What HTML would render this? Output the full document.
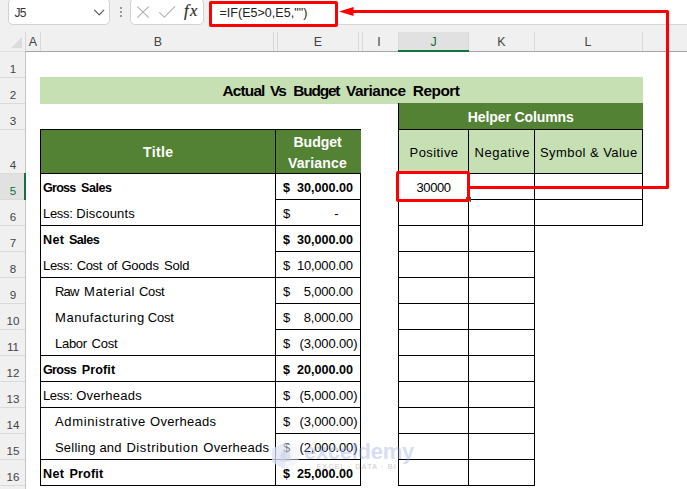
<!DOCTYPE html>
<html lang="en"><head><meta charset="utf-8"><title>Actual Vs Budget Variance Report</title>
<style>
html,body{margin:0;padding:0}
body{width:687px;height:489px;position:relative;overflow:hidden;background:#fff;font-family:"Liberation Sans", sans-serif}
.t{position:absolute;white-space:pre;line-height:20px;font-family:"Liberation Sans", sans-serif}
.a{position:absolute}
.k{position:absolute;background:#000}
</style></head>
<body>
<div class="a" style="left:0px;top:0px;width:687px;height:52px;background:#f0f0f0;"></div>
<div class="a" style="left:0px;top:52px;width:26px;height:437px;background:#f0f0f0;"></div>
<div class="a" style="left:209px;top:-1px;width:490px;height:26px;background:#fff;border:1px solid #d6d6d6;border-radius:4px 0 0 4px;box-sizing:border-box"></div>
<div class="a" style="left:8px;top:-2px;width:102px;height:27px;background:#fff;border:1px solid #d2d2d2;border-radius:5px;box-sizing:border-box"></div>
<div class="a" style="left:130px;top:-2px;width:74px;height:27px;background:#fff;border:1px solid #d2d2d2;border-radius:5px;box-sizing:border-box"></div>
<div class="a" style="left:119.5px;top:7.1px;width:2px;height:2px;background:#7c7c7c;border-radius:1px"></div>
<div class="a" style="left:119.5px;top:11.1px;width:2px;height:2px;background:#7c7c7c;border-radius:1px"></div>
<div class="a" style="left:119.5px;top:15.1px;width:2px;height:2px;background:#7c7c7c;border-radius:1px"></div>
<svg class="a" style="left:0;top:0" width="210" height="28" viewBox="0 0 210 28" fill="none" stroke-linecap="round" stroke-linejoin="round"><path d="M94.6 10.1 L99.2 14.9 L103.8 10.1" stroke="#555" stroke-width="1.15"/><path d="M137.6 6.9 L148.4 17.4 M148.4 6.9 L137.6 17.4" stroke="#b0b0b0" stroke-width="1.1"/><path d="M159.6 12.6 L164.4 17.2 L174.8 6.6" stroke="#b0b0b0" stroke-width="1.1"/></svg>
<div class="t" style="left:184px;top:1px;font-family:'Liberation Serif',serif;font-style:italic;font-size:16.5px;color:#2b2b2b;letter-spacing:1.5px;line-height:20px;-webkit-text-stroke:0.2px #2b2b2b">fx</div>
<div class="a" style="left:25px;top:32px;width:1px;height:19px;background:#d9d9d9;"></div>
<div class="a" style="left:40px;top:32px;width:1px;height:19px;background:#d9d9d9;"></div>
<div class="a" style="left:273px;top:32px;width:1px;height:19px;background:#d9d9d9;"></div>
<div class="a" style="left:277px;top:32px;width:1px;height:19px;background:#d9d9d9;"></div>
<div class="a" style="left:358px;top:32px;width:1px;height:19px;background:#d9d9d9;"></div>
<div class="a" style="left:362px;top:32px;width:1px;height:19px;background:#d9d9d9;"></div>
<div class="a" style="left:398px;top:32px;width:1px;height:19px;background:#d9d9d9;"></div>
<div class="a" style="left:468px;top:32px;width:1px;height:19px;background:#d9d9d9;"></div>
<div class="a" style="left:534px;top:32px;width:1px;height:19px;background:#d9d9d9;"></div>
<div class="a" style="left:642px;top:32px;width:1px;height:19px;background:#d9d9d9;"></div>
<div class="a" style="left:399px;top:32px;width:69px;height:18px;background:#e1e1e1;"></div>
<div class="a" style="left:0px;top:51px;width:26px;height:1px;background:#e2e2e2;"></div>
<div class="a" style="left:25px;top:51px;width:662px;height:1px;background:#a6a6a6;"></div>
<div class="a" style="left:398px;top:50px;width:71px;height:2px;background:#13733f;"></div>
<div class="a" style="left:25px;top:52px;width:1px;height:437px;background:#c6c6c6;"></div>
<div class="a" style="left:0px;top:77px;width:25px;height:1px;background:#dadada;"></div>
<div class="a" style="left:0px;top:103px;width:25px;height:1px;background:#dadada;"></div>
<div class="a" style="left:0px;top:129px;width:25px;height:1px;background:#dadada;"></div>
<div class="a" style="left:0px;top:173px;width:25px;height:1px;background:#dadada;"></div>
<div class="a" style="left:0px;top:199px;width:25px;height:1px;background:#dadada;"></div>
<div class="a" style="left:0px;top:225px;width:25px;height:1px;background:#dadada;"></div>
<div class="a" style="left:0px;top:251px;width:25px;height:1px;background:#dadada;"></div>
<div class="a" style="left:0px;top:277px;width:25px;height:1px;background:#dadada;"></div>
<div class="a" style="left:0px;top:303px;width:25px;height:1px;background:#dadada;"></div>
<div class="a" style="left:0px;top:329px;width:25px;height:1px;background:#dadada;"></div>
<div class="a" style="left:0px;top:355px;width:25px;height:1px;background:#dadada;"></div>
<div class="a" style="left:0px;top:381px;width:25px;height:1px;background:#dadada;"></div>
<div class="a" style="left:0px;top:407px;width:25px;height:1px;background:#dadada;"></div>
<div class="a" style="left:0px;top:433px;width:25px;height:1px;background:#dadada;"></div>
<div class="a" style="left:0px;top:459px;width:25px;height:1px;background:#dadada;"></div>
<div class="a" style="left:0px;top:485px;width:25px;height:1px;background:#dadada;"></div>
<div class="a" style="left:0px;top:174px;width:24px;height:25px;background:#e1e1e1;"></div>
<div class="a" style="left:24px;top:173px;width:2px;height:27px;background:#13733f;"></div>
<svg class="a" style="left:10px;top:36px" width="13" height="13" viewBox="0 0 13 13"><path d="M12 1 L12 12 L1 12 Z" fill="#dcdcdc"/></svg>
<div class="a" style="left:40px;top:77px;width:603px;height:27px;background:#c6e0b4;"></div>
<div class="a" style="left:399px;top:103px;width:244px;height:26px;background:#548235;"></div>
<div class="a" style="left:399px;top:130px;width:243px;height:43px;background:#c6e0b4;"></div>
<div class="a" style="left:41px;top:130px;width:320px;height:43px;background:#548235;"></div>
<div class="k" style="left:40px;top:129px;width:321px;height:1px"></div>
<div class="k" style="left:40px;top:173px;width:321px;height:1px"></div>
<div class="k" style="left:40px;top:225px;width:236px;height:1px"></div>
<div class="k" style="left:40px;top:277px;width:236px;height:1px"></div>
<div class="k" style="left:40px;top:355px;width:236px;height:1px"></div>
<div class="k" style="left:40px;top:381px;width:236px;height:1px"></div>
<div class="k" style="left:40px;top:407px;width:236px;height:1px"></div>
<div class="k" style="left:40px;top:459px;width:236px;height:1px"></div>
<div class="k" style="left:40px;top:485px;width:236px;height:1px"></div>
<div class="k" style="left:275px;top:199px;width:86px;height:1px"></div>
<div class="k" style="left:275px;top:225px;width:86px;height:1px"></div>
<div class="k" style="left:275px;top:251px;width:86px;height:1px"></div>
<div class="k" style="left:275px;top:277px;width:86px;height:1px"></div>
<div class="k" style="left:275px;top:303px;width:86px;height:1px"></div>
<div class="k" style="left:275px;top:329px;width:86px;height:1px"></div>
<div class="k" style="left:275px;top:355px;width:86px;height:1px"></div>
<div class="k" style="left:275px;top:381px;width:86px;height:1px"></div>
<div class="k" style="left:275px;top:407px;width:86px;height:1px"></div>
<div class="k" style="left:275px;top:433px;width:86px;height:1px"></div>
<div class="k" style="left:275px;top:459px;width:86px;height:1px"></div>
<div class="k" style="left:275px;top:485px;width:86px;height:1px"></div>
<div class="k" style="left:40px;top:129px;width:1px;height:357px"></div>
<div class="k" style="left:275px;top:129px;width:1px;height:357px"></div>
<div class="k" style="left:360px;top:173px;width:1px;height:313px"></div>
<div class="k" style="left:398px;top:129px;width:245px;height:1px"></div>
<div class="k" style="left:398px;top:173px;width:245px;height:1px"></div>
<div class="k" style="left:398px;top:199px;width:245px;height:1px"></div>
<div class="k" style="left:398px;top:225px;width:245px;height:1px"></div>
<div class="k" style="left:398px;top:251px;width:137px;height:1px"></div>
<div class="k" style="left:398px;top:277px;width:137px;height:1px"></div>
<div class="k" style="left:398px;top:303px;width:137px;height:1px"></div>
<div class="k" style="left:398px;top:329px;width:137px;height:1px"></div>
<div class="k" style="left:398px;top:355px;width:137px;height:1px"></div>
<div class="k" style="left:398px;top:381px;width:137px;height:1px"></div>
<div class="k" style="left:398px;top:407px;width:137px;height:1px"></div>
<div class="k" style="left:398px;top:433px;width:137px;height:1px"></div>
<div class="k" style="left:398px;top:459px;width:137px;height:1px"></div>
<div class="k" style="left:398px;top:485px;width:137px;height:1px"></div>
<div class="k" style="left:398px;top:103px;width:1px;height:383px"></div>
<div class="k" style="left:468px;top:129px;width:1px;height:357px"></div>
<div class="k" style="left:534px;top:129px;width:1px;height:357px"></div>
<div class="k" style="left:642px;top:129px;width:1px;height:97px"></div>
<div class="t" id="t0" style="top:81.00px;font-size:15.4px;color:#000;font-weight:bold;letter-spacing:-0.849px;left:222.60px;">Actual</div>
<div class="t" id="t1" style="top:81.00px;font-size:15.4px;color:#000;font-weight:bold;letter-spacing:-2.028px;left:270.10px;">Vs</div>
<div class="t" id="t2" style="top:81.00px;font-size:15.4px;color:#000;font-weight:bold;letter-spacing:-1.143px;left:293.20px;">Budget</div>
<div class="t" id="t3" style="top:81.00px;font-size:15.4px;color:#000;font-weight:bold;letter-spacing:-0.475px;left:346.00px;">Variance</div>
<div class="t" id="t4" style="top:81.00px;font-size:15.4px;color:#000;font-weight:bold;letter-spacing:-0.499px;left:412.80px;">Report</div>
<div class="t" id="t5" style="top:142.00px;font-size:14px;color:#fff;font-weight:bold;letter-spacing:0.367px;left:143.00px;">Title</div>
<div class="t" id="t6" style="top:132.00px;font-size:14px;color:#fff;font-weight:bold;letter-spacing:-0.004px;left:293.50px;">Budget</div>
<div class="t" id="t7" style="top:153.00px;font-size:14px;color:#fff;font-weight:bold;letter-spacing:0.170px;left:287.90px;">Variance</div>
<div class="t" id="t8" style="top:107.00px;font-size:14px;color:#fff;font-weight:bold;letter-spacing:-0.105px;left:467.80px;">Helper Columns</div>
<div class="t" id="t9" style="top:143.00px;font-size:13px;color:#000;letter-spacing:0.424px;left:409.55px;">Positive</div>
<div class="t" id="t10" style="top:143.00px;font-size:13px;color:#000;letter-spacing:0.527px;left:474.50px;">Negative</div>
<div class="t" id="t11" style="top:143.00px;font-size:13px;color:#000;letter-spacing:0.451px;left:539.90px;">Symbol &amp; Value</div>
<div class="t" id="t12" style="top:178.00px;font-size:12.6px;color:#000;font-weight:bold;letter-spacing:-0.827px;left:43.10px;">Gross</div>
<div class="t" id="t13" style="top:178.00px;font-size:12.6px;color:#000;font-weight:bold;letter-spacing:-0.505px;left:81.10px;">Sales</div>
<div class="t" id="t14" style="top:204.00px;font-size:13px;color:#000;letter-spacing:-0.320px;left:43.00px;">Less:</div>
<div class="t" id="t15" style="top:204.00px;font-size:13px;color:#000;letter-spacing:0.190px;left:76.20px;">Discounts</div>
<div class="t" id="t16" style="top:230.00px;font-size:12.6px;color:#000;font-weight:bold;letter-spacing:0.352px;left:43.00px;">Net</div>
<div class="t" id="t17" style="top:230.00px;font-size:12.6px;color:#000;font-weight:bold;letter-spacing:-0.505px;left:68.90px;">Sales</div>
<div class="t" id="t18" style="top:256.00px;font-size:13px;color:#000;letter-spacing:-0.245px;left:42.90px;">Less:</div>
<div class="t" id="t19" style="top:256.00px;font-size:13px;color:#000;letter-spacing:-0.378px;left:76.70px;">Cost</div>
<div class="t" id="t20" style="top:256.00px;font-size:13px;color:#000;letter-spacing:-0.344px;left:106.90px;">of</div>
<div class="t" id="t21" style="top:256.00px;font-size:13px;color:#000;letter-spacing:-0.203px;left:121.40px;">Goods</div>
<div class="t" id="t22" style="top:256.00px;font-size:13px;color:#000;letter-spacing:-0.144px;left:164.00px;">Sold</div>
<div class="t" id="t23" style="top:282.00px;font-size:13px;color:#000;letter-spacing:-0.908px;left:55.10px;">Raw</div>
<div class="t" id="t24" style="top:282.00px;font-size:13px;color:#000;letter-spacing:0.593px;left:84.00px;">Material</div>
<div class="t" id="t25" style="top:282.00px;font-size:13px;color:#000;letter-spacing:-0.311px;left:138.90px;">Cost</div>
<div class="t" id="t26" style="top:308.00px;font-size:13px;color:#000;letter-spacing:0.559px;left:55.10px;">Manufacturing</div>
<div class="t" id="t27" style="top:308.00px;font-size:13px;color:#000;letter-spacing:-0.178px;left:147.70px;">Cost</div>
<div class="t" id="t28" style="top:334.00px;font-size:13px;color:#000;letter-spacing:-0.338px;left:55.10px;">Labor</div>
<div class="t" id="t29" style="top:334.00px;font-size:13px;color:#000;letter-spacing:-0.178px;left:91.50px;">Cost</div>
<div class="t" id="t30" style="top:360.00px;font-size:12.6px;color:#000;font-weight:bold;letter-spacing:-0.627px;left:42.90px;">Gross</div>
<div class="t" id="t31" style="top:360.00px;font-size:12.6px;color:#000;font-weight:bold;letter-spacing:0.122px;left:81.70px;">Profit</div>
<div class="t" id="t32" style="top:386.00px;font-size:13px;color:#000;letter-spacing:-0.295px;left:42.90px;">Less:</div>
<div class="t" id="t33" style="top:386.00px;font-size:13px;color:#000;letter-spacing:0.251px;left:76.20px;">Overheads</div>
<div class="t" id="t34" style="top:412.00px;font-size:13px;color:#000;letter-spacing:0.674px;left:54.90px;">Administrative</div>
<div class="t" id="t35" style="top:412.00px;font-size:13px;color:#000;letter-spacing:0.288px;left:150.10px;">Overheads</div>
<div class="t" id="t36" style="top:438.00px;font-size:13px;color:#000;letter-spacing:0.245px;left:54.90px;">Selling</div>
<div class="t" id="t37" style="top:438.00px;font-size:13px;color:#000;letter-spacing:0.048px;left:99.60px;">and</div>
<div class="t" id="t38" style="top:438.00px;font-size:13px;color:#000;letter-spacing:0.588px;left:126.40px;">Distribution</div>
<div class="t" id="t39" style="top:438.00px;font-size:13px;color:#000;letter-spacing:0.263px;left:203.30px;">Overheads</div>
<div class="t" id="t40" style="top:464.00px;font-size:12.6px;color:#000;font-weight:bold;letter-spacing:0.402px;left:42.90px;">Net</div>
<div class="t" id="t41" style="top:464.00px;font-size:12.6px;color:#000;font-weight:bold;letter-spacing:0.182px;left:69.40px;">Profit</div>
<div class="t" id="t42" style="top:178.00px;font-size:12.6px;color:#000;font-weight:bold;left:282.90px;">$</div>
<div class="t" id="t43" style="top:178.00px;font-size:12.6px;color:#000;font-weight:bold;letter-spacing:0.021px;left:296.90px;">30,000.00</div>
<div class="t" id="t44" style="top:204.00px;font-size:13px;color:#000;left:282.90px;">$</div>
<div class="t" id="t45" style="top:204.00px;font-size:13px;color:#000;left:334.36px;">-</div>
<div class="t" id="t46" style="top:230.00px;font-size:12.6px;color:#000;font-weight:bold;left:282.90px;">$</div>
<div class="t" id="t47" style="top:230.00px;font-size:12.6px;color:#000;font-weight:bold;letter-spacing:0.021px;left:296.90px;">30,000.00</div>
<div class="t" id="t48" style="top:256.00px;font-size:13px;color:#000;left:282.90px;">$</div>
<div class="t" id="t49" style="top:256.00px;font-size:13px;color:#000;letter-spacing:-0.205px;left:296.90px;">10,000.00</div>
<div class="t" id="t50" style="top:282.00px;font-size:13px;color:#000;left:282.90px;">$</div>
<div class="t" id="t51" style="top:282.00px;font-size:13px;color:#000;letter-spacing:-0.187px;left:303.80px;">5,000.00</div>
<div class="t" id="t52" style="top:308.00px;font-size:13px;color:#000;left:282.90px;">$</div>
<div class="t" id="t53" style="top:308.00px;font-size:13px;color:#000;letter-spacing:-0.187px;left:303.80px;">8,000.00</div>
<div class="t" id="t54" style="top:334.00px;font-size:13px;color:#000;left:282.90px;">$</div>
<div class="t" id="t55" style="top:334.00px;font-size:13px;color:#000;letter-spacing:-0.141px;left:299.50px;">(3,000.00)</div>
<div class="t" id="t56" style="top:360.00px;font-size:12.6px;color:#000;font-weight:bold;left:282.90px;">$</div>
<div class="t" id="t57" style="top:360.00px;font-size:12.6px;color:#000;font-weight:bold;letter-spacing:0.021px;left:296.90px;">20,000.00</div>
<div class="t" id="t58" style="top:386.00px;font-size:13px;color:#000;left:282.90px;">$</div>
<div class="t" id="t59" style="top:386.00px;font-size:13px;color:#000;letter-spacing:-0.141px;left:299.50px;">(5,000.00)</div>
<div class="t" id="t60" style="top:412.00px;font-size:13px;color:#000;left:282.90px;">$</div>
<div class="t" id="t61" style="top:412.00px;font-size:13px;color:#000;letter-spacing:-0.141px;left:299.50px;">(3,000.00)</div>
<div class="t" id="t62" style="top:438.00px;font-size:13px;color:#000;left:282.90px;">$</div>
<div class="t" id="t63" style="top:438.00px;font-size:13px;color:#000;letter-spacing:-0.141px;left:299.50px;">(2,000.00)</div>
<div class="t" id="t64" style="top:464.00px;font-size:12.6px;color:#000;font-weight:bold;left:282.90px;">$</div>
<div class="t" id="t65" style="top:464.00px;font-size:12.6px;color:#000;font-weight:bold;letter-spacing:0.021px;left:296.90px;">25,000.00</div>
<div class="t" id="t66" style="top:178.00px;font-size:13px;color:#000;letter-spacing:-0.389px;left:416.50px;">30000</div>
<div class="t" id="t67" style="top:3.00px;font-size:12.5px;color:#222;letter-spacing:0.044px;left:219.40px;">=IF(E5&gt;0,E5,"")</div>
<div class="t" id="t68" style="top:3.00px;font-size:12px;color:#333;letter-spacing:-0.688px;left:14.40px;">J5</div>
<div class="t" id="t69" style="top:32.00px;font-size:12.4px;color:#444;left:28.87px;">A</div>
<div class="t" id="t70" style="top:32.00px;font-size:12.4px;color:#444;left:153.87px;">B</div>
<div class="t" id="t71" style="top:32.00px;font-size:12.4px;color:#444;left:313.87px;">E</div>
<div class="t" id="t72" style="top:32.00px;font-size:12.4px;color:#444;left:377.27px;">I</div>
<div class="t" id="t73" style="top:32.00px;font-size:12.4px;color:#444;left:497.37px;">K</div>
<div class="t" id="t74" style="top:32.00px;font-size:12.4px;color:#444;left:584.55px;">L</div>
<div class="t" id="t75" style="top:32.00px;font-size:12.4px;color:#0e703c;left:430.40px;">J</div>
<div class="t" id="t76" style="top:59.00px;font-size:11.6px;color:#444;left:9.67px;">1</div>
<div class="t" id="t77" style="top:85.00px;font-size:11.6px;color:#444;left:9.67px;">2</div>
<div class="t" id="t78" style="top:111.00px;font-size:11.6px;color:#444;left:9.67px;">3</div>
<div class="t" id="t79" style="top:155.00px;font-size:11.6px;color:#444;left:9.67px;">4</div>
<div class="t" id="t80" style="top:181.00px;font-size:11.6px;color:#0e703c;left:9.67px;">5</div>
<div class="t" id="t81" style="top:207.00px;font-size:11.6px;color:#444;left:9.67px;">6</div>
<div class="t" id="t82" style="top:233.00px;font-size:11.6px;color:#444;left:9.67px;">7</div>
<div class="t" id="t83" style="top:259.00px;font-size:11.6px;color:#444;left:9.67px;">8</div>
<div class="t" id="t84" style="top:285.00px;font-size:11.6px;color:#444;left:9.67px;">9</div>
<div class="t" id="t85" style="top:311.00px;font-size:11.6px;color:#444;left:6.45px;">10</div>
<div class="t" id="t86" style="top:337.00px;font-size:11.6px;color:#444;left:6.88px;">11</div>
<div class="t" id="t87" style="top:363.00px;font-size:11.6px;color:#444;left:6.45px;">12</div>
<div class="t" id="t88" style="top:389.00px;font-size:11.6px;color:#444;left:6.45px;">13</div>
<div class="t" id="t89" style="top:415.00px;font-size:11.6px;color:#444;left:6.45px;">14</div>
<div class="t" id="t90" style="top:441.00px;font-size:11.6px;color:#444;left:6.45px;">15</div>
<div class="t" id="t91" style="top:467.00px;font-size:11.6px;color:#444;left:6.45px;">16</div>
<svg class="a" style="left:270px;top:440px" width="32" height="32" viewBox="270 440 32 32"><path d="M285.3 442 L298.6 449 L298.6 462.5 L285.3 469.5 L272 462.5 L272 449 Z" fill="#eceff6" opacity="0.5"/><path d="M285.3 442 L285.3 469.5 L272 462.5 L272 449 Z" fill="#d5dcf6" opacity="0.5"/><path d="M280.5 453.5 L285.5 450 L290.5 453.5 L290.5 461.5 L280.5 461.5 Z" fill="#c3cbe6" opacity="0.5"/></svg>
<div class="t" style="left:304px;top:438px;font-size:22px;font-weight:bold;color:rgba(150,168,228,0.40);letter-spacing:-0.3px;line-height:28px">exceldemy</div>
<div class="t" style="left:316.5px;top:460.5px;font-size:7.3px;font-weight:bold;color:rgba(120,120,130,0.30);letter-spacing:1.0px;line-height:12px">EXCEL · DATA · BI</div>
<div class="a" style="left:209px;top:1px;width:129px;height:26px;box-sizing:border-box;border:3px solid #ff0000;border-radius:2px"></div>
<div class="a" style="left:396px;top:171px;width:74px;height:31px;box-sizing:border-box;border:3px solid #ff0000;border-radius:2px"></div>
<svg class="a" style="left:0;top:0" width="687" height="210" viewBox="0 0 687 210"><path d="M350 11.5 L667.5 11.5 L667.5 187.5 L470 187.5" fill="none" stroke="#ff0000" stroke-width="3" stroke-linejoin="round"/><path d="M339 11.5 L353.5 7 L353.5 16 Z" fill="#ff0000"/></svg>
<div class="a" style="left:466px;top:197px;width:1px;height:2px;background:#2a7a4b;"></div>
<div class="a" style="left:470px;top:197px;width:1px;height:5px;background:#1e6b3c;"></div>
</body></html>
